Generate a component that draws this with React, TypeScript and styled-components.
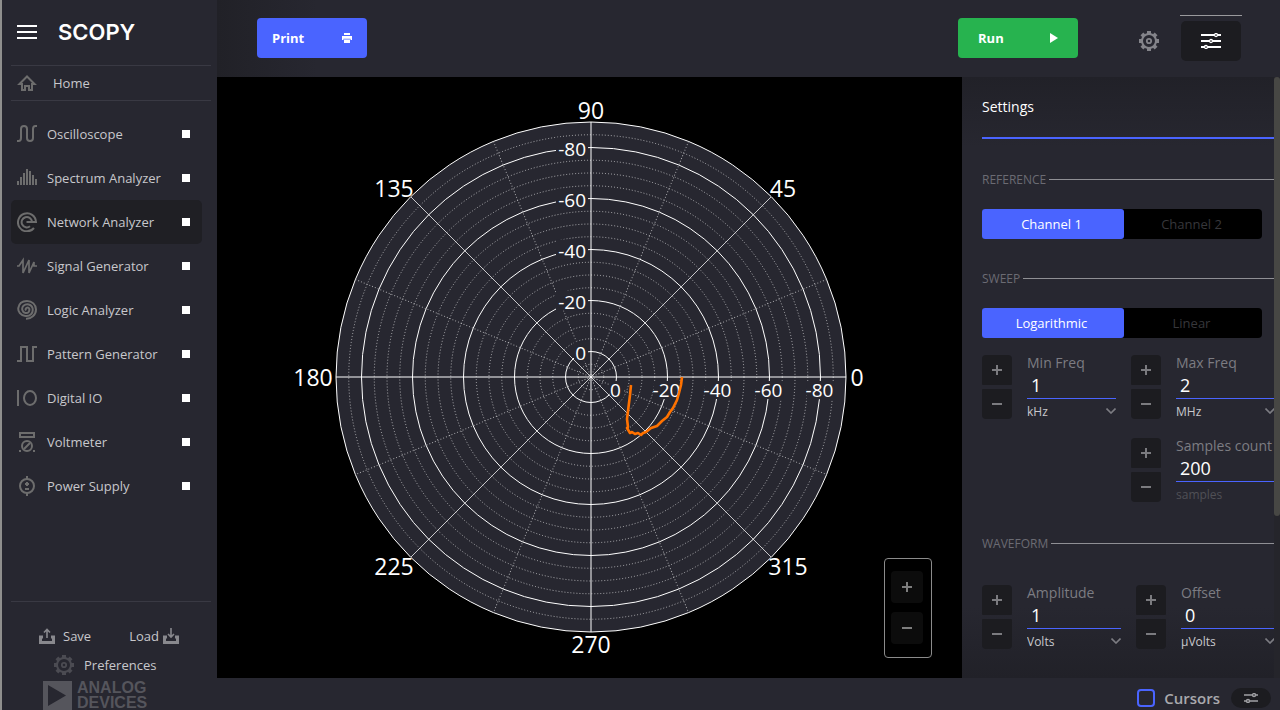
import React from "react";
import styled, { createGlobalStyle, css } from "styled-components";

const Global = createGlobalStyle`
  *, *::before, *::after { box-sizing: border-box; }
  body { margin: 0; background: #272730; }
  body, button, input, select { font-family: "Open Sans", "Noto Sans", sans-serif; font-size: 13px; }
  button, input, select { margin: 0; padding: 0; border: 0; background: none; color: inherit; }
  button { cursor: pointer; }
  svg { display: block; flex: none; }
`;

const Page = styled.div`
  display: flex;
  height: 100vh;
  min-height: 600px;
  overflow: hidden;
  color: #c8c8cc;
  background: #272730;
`;

const Sidebar = styled.aside`
  display: flex;
  flex-direction: column;
  flex: none;
  width: 217px;
  border-left: 2px solid #8f8f8d;
`;

const Brand = styled.div`
  display: flex;
  align-items: center;
  gap: 21px;
  height: 65px;
  padding: 0 0 2px 15px;
`;

const IconButton = styled.button`
  display: grid;
  place-items: center;
  color: #fff;
`;

const BrandName = styled.span`
  font: 600 22px/22px Inter, sans-serif;
  color: #fff;
`;

const HomeLink = styled.a`
  display: flex;
  align-items: center;
  gap: 16px;
  flex: none;
  height: 36px;
  margin: 0 6px 11px 9px;
  padding-left: 6px;
  border: solid #393943;
  border-width: 1px 0;
  color: #c8c8cc;
  text-decoration: none;
`;

const Nav = styled.nav`
  display: flex;
  flex-direction: column;
  flex: 1;
  min-height: 0;
  overflow: hidden;
  padding: 0 15px 0 9px;
`;

const NavItem = styled.a<{ $active?: boolean }>`
  display: flex;
  align-items: center;
  flex: none;
  gap: 10px;
  height: 44px;
  padding: 0 12px 0 6px;
  border-radius: 5px;
  color: #c8c8cc;
  text-decoration: none;
  background: ${(p) => (p.$active ? "#1f1f24" : "transparent")};
`;

const NavLabel = styled.span`
  flex: 1;
  white-space: nowrap;
`;

const StopMark = styled.span`
  width: 8px;
  height: 8px;
  background: #fff;
`;

const SidebarFoot = styled.div`
  flex: none;
  height: 109px;
  margin: 0 6px 0 9px;
  padding-top: 19px;
  border-top: 1px solid #393943;
  overflow: hidden;
`;

const FileRow = styled.div`
  display: flex;
  justify-content: space-between;
  padding: 0 32px 0 28px;
`;

const FootButton = styled.button<{ $gap: number }>`
  display: flex;
  align-items: center;
  gap: ${(p) => p.$gap}px;
  height: 29px;
`;

const PreferencesRow = styled.div`
  padding-left: 43px;
`;

const Company = styled.div`
  display: flex;
  align-items: flex-end;
  gap: 5px;
  padding: 1px 0 0 32px;
  color: #55555c;
  font: 700 16px/15px "Liberation Sans", sans-serif;
`;

const Main = styled.main`
  display: flex;
  flex-direction: column;
  flex: 1;
  min-width: 0;
`;

const Toolbar = styled.header`
  display: flex;
  align-items: center;
  flex: none;
  height: 77px;
  padding: 0 38px 2px 40px;
  background: linear-gradient(to right, #212127, #272730 100px);
`;

const ActionButton = styled.button<{ $run?: boolean }>`
  display: flex;
  align-items: center;
  justify-content: space-between;
  width: ${(p) => (p.$run ? 120 : 110)}px;
  height: 40px;
  padding: 0 ${(p) => (p.$run ? 20 : 15)}px;
  border-radius: 4px;
  font-weight: 700;
  color: #fff;
  background: ${(p) => (p.$run ? "#27b34f" : "#4a64ff")};
`;

const Spacer = styled.div`
  flex: 1;
`;

const GearButton = styled(IconButton)`
  width: 20px;
  margin: 6px 21px 0 61px;
  color: #84848a;
`;

const MenuTab = styled.div`
  align-self: flex-start;
  margin-top: 15px;
  padding: 5px 1px 0;
  border-top: 1px solid #9a9a9d;
`;

const MenuButton = styled(IconButton)`
  width: 60px;
  height: 40px;
  border-radius: 5px;
  background: #1c1c20;
`;

const Workspace = styled.div`
  display: flex;
  flex: 1;
  min-height: 0;
`;

const Plot = styled.section`
  position: relative;
  flex: 1;
  min-width: 0;
  background: #000;
`;

const Chart = styled.svg`
  width: 100%;
  height: 100%;
  font-family: "Open Sans", "Noto Sans", sans-serif;
`;

const ZoomBox = styled.div`
  position: absolute;
  right: 30px;
  bottom: 20px;
  display: flex;
  flex-direction: column;
  gap: 9px;
  padding: 12px 8px 13px 6px;
  border: 1px solid #8b8b8b;
  border-radius: 4px;
`;

const ZoomButton = styled(IconButton)`
  width: 32px;
  height: 32px;
  border-radius: 4px;
  color: #7d7d7d;
  background: #0c0c0c;
`;

const SidePanel = styled.aside`
  display: flex;
  flex: none;
  width: 318px;
  background: linear-gradient(#212128, #272730 70px, #272730 calc(100% - 70px), #212128);
`;

const PanelBody = styled.div`
  flex: 1;
  min-width: 0;
  padding-left: 20px;
  overflow: hidden;
`;

const PanelTitle = styled.h2`
  height: 62px;
  margin: 0 0 30px;
  padding-top: 20px;
  border-bottom: 2px solid #4a64ff;
  font-size: 14px;
  line-height: 20px;
  font-weight: 400;
  color: #fff;
`;

const ScrollTrack = styled.div`
  width: 6px;
  background: #25252b;
`;

const ScrollThumb = styled.div`
  height: 73%;
  border-radius: 3px;
  background: #474744;
`;

const SectionTitle = styled.h3`
  display: flex;
  align-items: center;
  gap: 3px;
  height: 20px;
  margin: 29px 0 20px;
  font-size: 12px;
  font-weight: 400;
  color: #6b6b73;
  &::after {
    content: "";
    flex: 1;
    height: 1px;
    background: #8f8f94;
  }
`;

const Toggle = styled.div`
  display: flex;
  width: 280px;
  height: 30px;
  border-radius: 4px;
  background: #000;
`;

const ToggleOption = styled.button<{ $on?: boolean }>`
  flex: ${(p) => (p.$on ? "0 0 142px" : "1")};
  padding-right: 3px;
  border-radius: 3px;
  color: ${(p) => (p.$on ? "#fff" : "#37373b")};
  background: ${(p) => (p.$on ? "#4a64ff" : "transparent")};
`;

const Fields = styled.div<{ $split: number; $before: number }>`
  display: grid;
  grid-template-columns: ${(p) => p.$split}px ${(p) => 278 - p.$split}px;
  gap: 17px 15px;
  width: 293px;
  margin-top: ${(p) => p.$before}px;
`;

const Spin = styled.div<{ $second?: boolean }>`
  display: flex;
  gap: 15px;
  height: 66px;
  ${(p) => p.$second && css`grid-column: 2;`}
`;

const StepColumn = styled.div`
  display: flex;
  flex-direction: column;
  gap: 4px;
`;

const StepButton = styled(IconButton)<{ $bottom?: boolean }>`
  width: 30px;
  height: 30px;
  border-radius: ${(p) => (p.$bottom ? "1px 1px 4px 4px" : "4px 4px 1px 1px")};
  color: #7b7b7f;
  background: #1c1c20;
`;

const FieldColumn = styled.div`
  display: flex;
  flex-direction: column;
  flex: 1;
  min-width: 0;
`;

const FieldLabel = styled.label`
  flex: none;
  height: 17px;
  font-size: 14px;
  line-height: 15px;
  white-space: nowrap;
  color: #7c7c82;
`;

const FieldInput = styled.input`
  flex: none;
  width: 100%;
  height: 27px;
  padding-left: 4px;
  border-bottom: 1px solid #4a64ff;
  font-size: 18px;
  color: #fff;
  outline: none;
`;

const UnitBox = styled.div`
  display: grid;
  align-items: center;
  flex: none;
  height: 24px;
  > * { grid-area: 1 / 1; }
  > svg { justify-self: end; pointer-events: none; }
`;

const UnitSelect = styled.select`
  width: 100%;
  appearance: none;
  font-size: 12px;
  color: #c8c8cc;
`;

const UnitText = styled.span`
  font-size: 12px;
  color: #505056;
`;

const StatusBar = styled.footer`
  display: flex;
  align-items: center;
  justify-content: flex-end;
  flex: none;
  height: 32px;
  padding: 8px 9px 0 0;
  overflow: hidden;
`;

const CursorsLabel = styled.label`
  display: flex;
  align-items: center;
  gap: 9px;
  margin-right: 11px;
  font-size: 15px;
  font-weight: 600;
  color: #a9a9ad;
`;

const CheckBox = styled.input`
  appearance: none;
  width: 18px;
  height: 18px;
  border: 2px solid #4a64ff;
  border-radius: 4px;
`;

const Pill = styled(IconButton)`
  width: 40px;
  height: 20px;
  border-radius: 10px;
  color: #a0a0a4;
  background: #1c1c20;
`;

const stroke = { fill: "none", stroke: "currentColor", strokeWidth: 2 } as const;

const NavIcon = ({ children }: { children: React.ReactNode }) => (
  <svg width="20" height="20" viewBox="0 0 20 20" color="#6d6d6d" {...stroke} aria-hidden="true">
    {children}
  </svg>
);

const Gear = () => (
  <svg width="20" height="20" viewBox="0 0 20 20" fill="none" stroke="currentColor" aria-hidden="true">
    <circle cx="10" cy="10" r="7" strokeWidth="2" />
    <circle cx="10" cy="10" r="2.2" strokeWidth="1.8" />
    {[0, 45, 90, 135, 180, 225, 270, 315].map((a) => (
      <path key={a} d="M10 0v3" strokeWidth="4" transform={`rotate(${a} 10 10)`} />
    ))}
  </svg>
);

const Sign = ({ plus }: { plus?: boolean }) => (
  <svg width="12" height="12" viewBox="0 0 12 12" stroke="currentColor" strokeWidth="2" aria-hidden="true">
    <path d={plus ? "M1 6h10M6 1v10" : "M1 6h10"} />
  </svg>
);

const Tray = ({ down }: { down?: boolean }) => (
  <svg width="16" height="16" viewBox="0 0 16 16" fill="none" stroke="#88888d" aria-hidden="true">
    <path d="M4 9H1.500v5.500h13V9H12" strokeWidth="3" />
    <path d={down ? "M8 0v9M5 6l3 3 3-3" : "M8 10V1M5 4.500l3-3 3 3"} strokeWidth="1.600" />
  </svg>
);

const tools: { name: string; icon: React.ReactNode; active?: boolean }[] = [
  { name: "Oscilloscope", icon: <path d="M0 17h1.500c2 0 2.500-1 2.500-3V5c0-2 1-3 3-3s3 1 3 3v9c0 2 1 3 3 3s3-1 3-3V5c0-2 1-3 2.500-3H20" /> },
  { name: "Spectrum Analyzer", icon: <path d="M1 17v-4M4 17V9M7 17V5M10 17V1M13 17V3M16 17V7M19 17v-6" /> },
  {
    name: "Network Analyzer",
    active: true,
    icon: <path d="M17 16A9 9 0 1 1 19 10H9.500M15 9.500A5.200 5.200 0 1 0 13 14.300" />,
  },
  { name: "Signal Generator", icon: <path strokeWidth="1.700" d="M0 10h2l4-6v13l6-13v13l5-11v4h3" /> },
  { name: "Logic Analyzer", icon: <path d="M9 10.500a1.800 1.800 0 1 1 3.200-2C13 11.500 11 13.500 8.500 13 5 12.300 4.200 8 6.500 5.800 9.500 3 14.500 4.200 15.500 8c1.200 5-2.500 8.500-7 8C3.500 15.300.8 11.500 1.300 8 2 3.500 5.500 1 10 1c5 0 9 3.500 9 8.500 0 5.500-5 9.500-10 9.300" /> },
  { name: "Pattern Generator", icon: <path d="M0 17h4V3h6v14h6V3h4" /> },
  { name: "Digital IO", icon: <><path d="M1 2v16" /><ellipse cx="13" cy="10" rx="6" ry="7" /></> },
  {
    name: "Voltmeter",
    icon: (
      <>
        <path d="M3 1h14v4H3z" />
        <circle cx="10" cy="14" r="5" />
        <path d="M7 17l6-6M2 19h2M16 19h2" />
      </>
    ),
  },
  {
    name: "Power Supply",
    icon: (
      <>
        <circle cx="10" cy="10" r="7" />
        <path d="M10 0v3M10 17v3M8 13h4M8 8h4M10 6v4" />
      </>
    ),
  },
];

const UNIT = 51;
const majors = [0, 1, 2, 3, 4].map((i) => ({ text: i ? `-${i * 20}` : "0", r: UNIT * i + UNIT / 2 }));
const minors = Array.from({ length: 19 }, (_, i) => ((i + 1) * UNIT) / 4).filter((_, i) => i % 4 !== 1);

const angles = [
  { text: "90", x: 0, y: -258 },
  { text: "45", x: 192, y: -180 },
  { text: "135", x: -197, y: -180 },
  { text: "180", x: -278, y: 9 },
  { text: "0", x: 266, y: 9 },
  { text: "225", x: -197, y: 198 },
  { text: "315", x: 197, y: 198 },
  { text: "270", x: 0, y: 276 },
];

const PolarChart = () => (
  <Chart viewBox="0 0 745 601" role="img" aria-label="Polar response">
    <g transform="translate(374 300)" fill="none" stroke="#fff">
      <circle r="255" fill="#272730" />
      <g strokeDasharray="1 2" strokeOpacity="0.6">
        {minors.map((r) => <circle key={r} r={r} />)}
        {[22.5, 67.5, 112.5, 157.5].map((a) => (
          <path key={a} d="M-255 0H255" transform={`rotate(${a})`} />
        ))}
      </g>
      {majors.map((m) => <circle key={m.r} r={m.r} />)}
      <g stroke="none" fill="#272730">
        {majors.map((m, i) => (
          <React.Fragment key={m.r}>
            <rect x={i ? -35 : -17} y={-m.r - 10} width={i ? 32 : 14} height="20" />
            <rect x={m.r - (i ? 14 : 7)} y="4" width={i ? 28 : 14} height="18" />
          </React.Fragment>
        ))}
      </g>
      <path d="M-255 0H255M0-255V255" />
      <path d="M-180-180L180 180M-180 180L180-180" strokeOpacity="0.75" />
      <g stroke="none" fill="#fff" fontSize="19">
        {majors.map((m) => (
          <React.Fragment key={m.r}>
            <text x="-5" y={-m.r + 8} textAnchor="end">{m.text}</text>
            <text x={m.r - 1} y="20" textAnchor="middle">{m.text}</text>
          </React.Fragment>
        ))}
      </g>
      <g stroke="none" fill="#fff" fontSize="23" fontWeight="500" textAnchor="middle">
        {angles.map((a) => <text key={a.text} x={a.x} y={a.y}>{a.text}</text>)}
      </g>
      <path
        d="M40 8L39 18 37 34 36 42 37 50 36 51 39 56 41 55 44 57 47 56 50 58 52 56 55 55 60 51 66 49 71 44 76 40 79 35 82 31 86 23 88 16 90 8 91 0"
        stroke="#ff7200"
        strokeWidth="2.600"
        strokeLinejoin="round"
      />
    </g>
  </Chart>
);

type SpinProps = { id: string; label: string; value: string; units?: string[]; note?: string; second?: boolean };

const SpinField = ({ id, label, value, units, note, second }: SpinProps) => (
  <Spin $second={second}>
    <StepColumn>
      <StepButton aria-label={`Increase ${label}`}><Sign plus /></StepButton>
      <StepButton $bottom aria-label={`Decrease ${label}`}><Sign /></StepButton>
    </StepColumn>
    <FieldColumn>
      <FieldLabel htmlFor={id}>{label}</FieldLabel>
      <FieldInput id={id} defaultValue={value} />
      <UnitBox>
        {units ? (
          <>
            <UnitSelect aria-label={`${label} unit`} defaultValue={units[0]}>
              {units.map((u) => <option key={u}>{u}</option>)}
            </UnitSelect>
            <svg width="10" height="6" viewBox="0 0 10 6" fill="none" stroke="#7c7c82" strokeWidth="1.600" aria-hidden="true">
              <path d="M.5.5L5 5 9.500.5" />
            </svg>
          </>
        ) : (
          <UnitText>{note}</UnitText>
        )}
      </UnitBox>
    </FieldColumn>
  </Spin>
);

export default function App() {
  return (
    <>
      <Global />
      <Page>
        <Sidebar>
          <Brand>
            <IconButton aria-label="Menu">
              <svg width="20" height="16" viewBox="0 0 20 16" {...stroke}>
                <path d="M0 2h20M0 8h20M0 14h20" />
              </svg>
            </IconButton>
            <BrandName>SCOPY</BrandName>
          </Brand>
          <HomeLink href="#home">
            <NavIcon><path d="M2.500 11L10 3.500l7.500 7.500H15v6h-3v-4H8v4H5v-6z" /></NavIcon>
            Home
          </HomeLink>
          <Nav>
            {tools.map((t) => (
              <NavItem key={t.name} href="#tool" $active={t.active}>
                <NavIcon>{t.icon}</NavIcon>
                <NavLabel>{t.name}</NavLabel>
                <StopMark />
              </NavItem>
            ))}
          </Nav>
          <SidebarFoot>
            <FileRow>
              <FootButton $gap={8}><Tray />Save</FootButton>
              <FootButton $gap={4}>Load<Tray down /></FootButton>
            </FileRow>
            <PreferencesRow>
              <FootButton $gap={10}>
                <svg width="20" height="20" color="#4b4b52"><Gear /></svg>
                Preferences
              </FootButton>
            </PreferencesRow>
            <Company>
              <svg width="29" height="29" viewBox="0 0 29 29" aria-hidden="true">
                <path fill="currentColor" fillRule="evenodd" d="M0 0h29v29H0zM5 4v21l18-10.500z" />
              </svg>
              <span>ANALOG<br />DEVICES</span>
            </Company>
          </SidebarFoot>
        </Sidebar>
        <Main>
          <Toolbar>
            <ActionButton>
              Print
              <svg width="10" height="10" viewBox="0 0 10 10" fill="currentColor" aria-hidden="true">
                <path d="M2 0h6v2H2zM0 3h10v4H8.500V5.500h-7V7H0zM2 6.500h6V10H2z" />
                <path d="M0 3h10v2.500H0z" />
              </svg>
            </ActionButton>
            <Spacer />
            <ActionButton $run>
              Run
              <svg width="8" height="10" viewBox="0 0 8 10" fill="currentColor" aria-hidden="true">
                <path d="M0 0l8 5-8 5z" />
              </svg>
            </ActionButton>
            <GearButton aria-label="General settings"><Gear /></GearButton>
            <MenuTab>
              <MenuButton aria-label="Instrument settings">
                <svg width="20" height="16" viewBox="0 0 20 16" {...stroke}>
                  <path d="M0 2h20M0 8h20M0 14h20" />
                  <g fill="#1c1c20" strokeWidth="1.300">
                    <circle cx="15" cy="2" r="1.500" />
                    <circle cx="10" cy="8" r="1.500" />
                    <circle cx="5" cy="14" r="1.500" />
                  </g>
                </svg>
              </MenuButton>
            </MenuTab>
          </Toolbar>
          <Workspace>
            <Plot>
              <PolarChart />
              <ZoomBox>
                <ZoomButton aria-label="Zoom in"><Sign plus /></ZoomButton>
                <ZoomButton aria-label="Zoom out"><Sign /></ZoomButton>
              </ZoomBox>
            </Plot>
            <SidePanel>
              <PanelBody>
                <PanelTitle>Settings</PanelTitle>
                <SectionTitle>REFERENCE</SectionTitle>
                <Toggle>
                  <ToggleOption $on>Channel 1</ToggleOption>
                  <ToggleOption>Channel 2</ToggleOption>
                </Toggle>
                <SectionTitle>SWEEP</SectionTitle>
                <Toggle>
                  <ToggleOption $on>Logarithmic</ToggleOption>
                  <ToggleOption>Linear</ToggleOption>
                </Toggle>
                <Fields $split={134} $before={17}>
                  <SpinField id="min" label="Min Freq" value="1" units={["kHz", "MHz"]} />
                  <SpinField id="max" label="Max Freq" value="2" units={["MHz", "kHz"]} />
                  <SpinField id="count" label="Samples count" value="200" note="samples" second />
                </Fields>
                <SectionTitle>WAVEFORM</SectionTitle>
                <Fields $split={139} $before={32}>
                  <SpinField id="amp" label="Amplitude" value="1" units={["Volts", "mVolts"]} />
                  <SpinField id="off" label="Offset" value="0" units={["µVolts", "Volts"]} />
                </Fields>
              </PanelBody>
              <ScrollTrack><ScrollThumb /></ScrollTrack>
            </SidePanel>
          </Workspace>
          <StatusBar>
            <CursorsLabel>
              <CheckBox type="checkbox" />
              Cursors
            </CursorsLabel>
            <Pill aria-label="Cursor settings">
              <svg width="14" height="10" viewBox="0 0 14 10" fill="none" stroke="currentColor" strokeWidth="1.400">
                <path d="M0 2h8M12 2h2M0 8h2M6 8h8" />
                <circle cx="10" cy="2" r="1.500" />
                <circle cx="4" cy="8" r="1.500" />
              </svg>
            </Pill>
          </StatusBar>
        </Main>
      </Page>
    </>
  );
}
